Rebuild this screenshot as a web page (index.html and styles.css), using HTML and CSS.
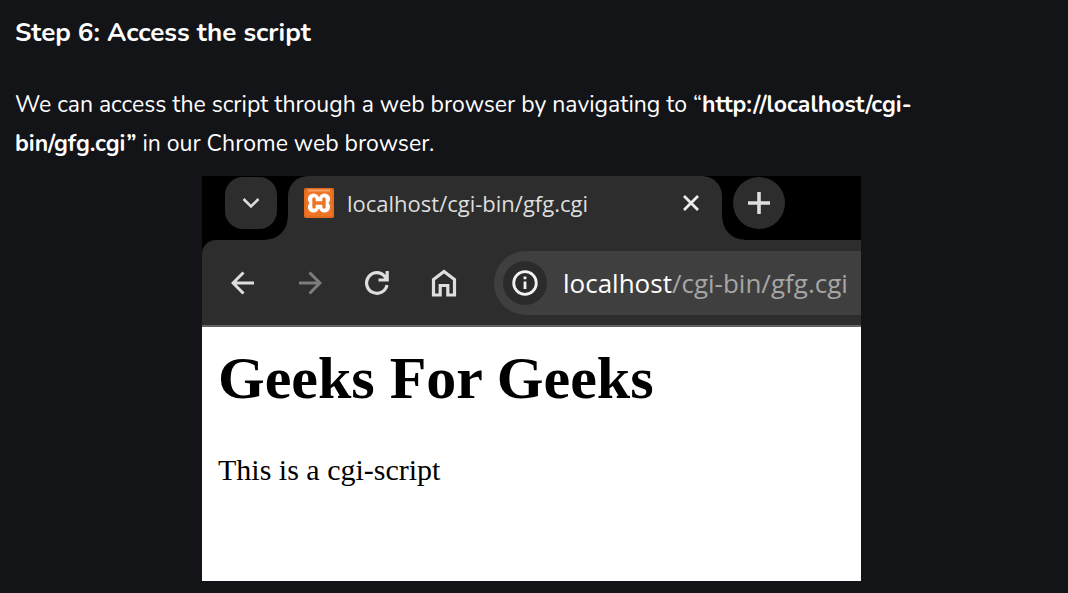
FILE: index.html
```html
<!DOCTYPE html>
<html lang="en">
<head>
<meta charset="utf-8">
<meta name="viewport" content="width=device-width, initial-scale=1">
<title>Step 6: Access the script</title>
<link rel="stylesheet" href="styles.css">
</head>
<body>
<article class="article">
  <h3 class="step-title">Step 6: Access the script</h3>
  <p class="step-text">We can access the script through a web browser by navigating to “<b>http://localhost/cgi-bin/gfg.cgi”</b> in our Chrome web browser.</p>
  <section class="browser" aria-label="Browser window">
    <div class="tab-strip">
      <button class="tab-search" aria-label="Search tabs">
        <svg width="18" height="12" viewBox="0 0 18 12"><path d="M1.500 2 9 9.500 16.500 2" fill="none" stroke="#dcdcdc" stroke-width="2.600"/></svg>
      </button>
      <div class="tab">
        <svg class="favicon" width="30" height="30" viewBox="0 0 30 30">
          <rect width="30" height="30" rx="2" fill="#ee7425"/>
          <rect x="1" y="1" width="28" height="28" rx="1" fill="none" stroke="#d9641a" stroke-width="1"/>
          <path d="M4 2.500H26" stroke="#f6a36c" stroke-width="2"/>
          <circle cx="9.500" cy="11" r="5.600" fill="#fff"/>
          <circle cx="20.500" cy="11" r="5.600" fill="#fff"/>
          <circle cx="9.500" cy="19" r="5.600" fill="#fff"/>
          <circle cx="20.500" cy="19" r="5.600" fill="#fff"/>
          <rect x="8" y="9" width="14" height="12" fill="#fff"/>
          <path d="M10 11V19M20 11V19M10 15H20" stroke="#ee7425" stroke-width="3.400" stroke-linecap="round" fill="none"/>
        </svg>
        <span class="tab-title">localhost/cgi-bin/gfg.cgi</span>
        <button class="tab-close" aria-label="Close tab">
          <svg width="18" height="18" viewBox="0 0 18 18"><path d="M2 2 16 16M16 2 2 16" stroke="#ededed" stroke-width="2.800"/></svg>
        </button>
      </div>
      <button class="new-tab" aria-label="New tab">
        <svg width="24" height="24" viewBox="0 0 24 24"><path d="M12 1V23M1 12H23" stroke="#dedede" stroke-width="3.600"/></svg>
      </button>
    </div>
    <div class="toolbar">
      <button class="tool" aria-label="Back">
        <svg width="24" height="24" viewBox="0 0 24 24"><path d="M23 12H2.500M12.500 1.500 2 12 12.500 22.500" fill="none" stroke="#dedede" stroke-width="3"/></svg>
      </button>
      <button class="tool" aria-label="Forward" disabled>
        <svg width="24" height="24" viewBox="0 0 24 24"><path d="M1 12H21.500M11.500 1.500 22 12 11.500 22.500" fill="none" stroke="#7d7d7d" stroke-width="3"/></svg>
      </button>
      <button class="tool" aria-label="Reload">
        <svg width="24" height="24" viewBox="0 0 24 24"><path d="M22 14A10.300 10.300 0 1 1 19.500 5L21.500 8M22.200 0V9H13.500" fill="none" stroke="#dedede" stroke-width="3.200"/></svg>
      </button>
      <button class="tool" aria-label="Home">
        <svg width="26" height="28" viewBox="0 0 26 28"><path d="M2.500 10.500 13 2.500 23.500 10.500V26H16.800V16.500H9.200V26H2.500Z" fill="none" stroke="#dedede" stroke-width="3.200"/></svg>
      </button>
      <div class="address">
        <button class="site-info" aria-label="View site information">
          <svg width="26" height="26" viewBox="0 0 26 26"><circle cx="13" cy="13" r="11.300" fill="none" stroke="#f2f2f2" stroke-width="2.800"/><path d="M13 11.500V19M13 6.500V9.300" stroke="#f2f2f2" stroke-width="2.800"/></svg>
        </button>
        <span class="url"><span class="host">localhost</span>/cgi-bin/gfg.cgi</span>
      </div>
    </div>
    <div class="page">
      <h1 class="page-title">Geeks For Geeks</h1>
      <p class="page-text">This is a cgi-script</p>
    </div>
  </section>
</article>
</body>
</html>
```
FILE: styles.css
```css
* { box-sizing: border-box; }
body {
  margin: 0;
  background: #131418;
  color: #fff;
  font-family: Nunito, "Open Sans", "Noto Sans", sans-serif;
}
.article { padding: 13px 20px 12px 15px; }
.step-title {
  margin: 0 0 32px;
  font-size: 26px;
  line-height: 40px;
  font-weight: 700;
}
.step-text {
  margin: 0 0 13px;
  padding-right: 32px;
  font-size: 23px;
  line-height: 39px;
}
.browser {
  max-width: 659px;
  margin: 0 auto;
  overflow: hidden;
  background: #000;
  font-family: "Segoe UI", "Open Sans", "Noto Sans", sans-serif;
}
button {
  display: flex;
  flex: none;
  align-items: center;
  justify-content: center;
  padding: 0;
  border: 0;
  background: none;
}
.tab-strip {
  display: flex;
  height: 64px;
  padding: 1px 0 0 23px;
}
.tab-search, .new-tab {
  width: 52px;
  height: 52px;
  background: #2d2d2d;
}
.tab-search { border-radius: 18px; }
.new-tab { border-radius: 50%; }
.tab {
  position: relative;
  display: flex;
  align-items: center;
  flex: 0 1 434px;
  min-width: 0;
  margin: -1px 11px 0;
  padding: 0 22px 10px 16px;
  border-radius: 20px 20px 0 0;
  background: #2d2d2d;
}
.tab::before, .tab::after {
  content: "";
  position: absolute;
  bottom: 0;
  width: 22px;
  height: 22px;
}
.tab::before {
  right: 100%;
  background: radial-gradient(circle at 0 0, transparent 21px, #2d2d2d 22px);
}
.tab::after {
  left: 100%;
  background: radial-gradient(circle at 100% 0, transparent 21px, #2d2d2d 22px);
}
.favicon { flex: none; }
.tab-title {
  flex: 1;
  margin-left: 13px;
  color: #dedede;
  font-size: 22px;
  line-height: 32px;
  white-space: nowrap;
}
.toolbar {
  display: flex;
  align-items: center;
  height: 87px;
  padding-left: 19px;
  border-bottom: 2px solid #626262;
  border-radius: 14px 0 0 0;
  background: #2d2d2d;
}
.tool {
  width: 44px;
  height: 44px;
  margin-right: 23px;
}
.address {
  display: flex;
  align-items: center;
  flex: 1;
  min-width: 0;
  height: 64px;
  margin-left: 5px;
  padding-left: 9px;
  border-radius: 32px 0 0 32px;
  background: #3f3f3f;
}
.site-info {
  width: 44px;
  height: 44px;
  border-radius: 50%;
  background: #2b2b2b;
}
.url {
  margin-left: 16px;
  color: #a6a6a6;
  font-size: 26px;
  line-height: 36px;
  white-space: nowrap;
}
.host { color: #fff; }
.page {
  min-height: 254px;
  padding: 18px 16px;
  background: #fff;
  color: #000;
  font-family: "Liberation Serif", "Times New Roman", serif;
}
.page-title {
  margin: 0 0 42px;
  font-size: 60px;
  line-height: 66px;
  font-weight: 700;
}
.page-text {
  margin: 0;
  font-size: 30px;
  line-height: 34px;
}
```
